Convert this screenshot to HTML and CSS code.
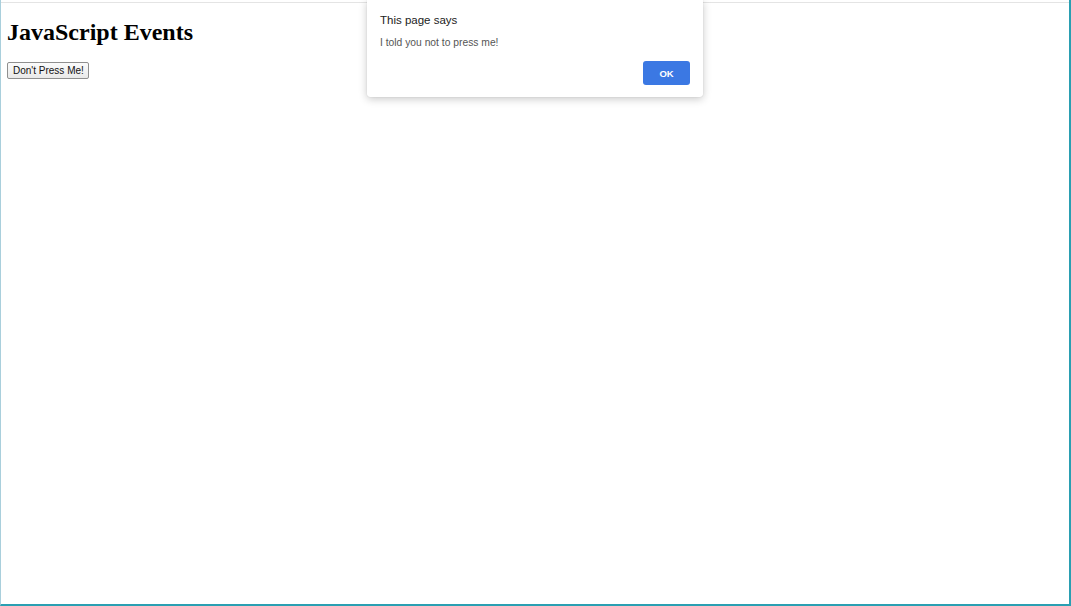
FILE: index.html
```html
<!DOCTYPE html>
<html>
<head>
<meta charset="utf-8">
<title>JavaScript Events</title>
<link rel="stylesheet" href="styles.css">
</head>
<body>
<div class="window">
  <div class="viewport">
    <h1 class="title">JavaScript Events</h1>
    <button class="press-btn">Don't Press Me!</button>
  </div>
  <div class="dialog">
    <div class="dialog-title">This page says</div>
    <div class="dialog-msg">I told you not to press me!</div>
    <div class="dialog-actions">
      <button class="ok-btn">OK</button>
    </div>
  </div>
</div>
</body>
</html>
```

FILE: styles.css
```css
html, body {
  margin: 0;
  padding: 0;
  background: #ffffff;
}
.window {
  position: relative;
  width: 1071px;
  height: 606px;
  box-sizing: border-box;
  padding-top: 2px;
  border-left: 1px solid #a9cfdc;
  border-right: 2px solid #2a9fb2;
  border-bottom: 2px solid #2a9fb2;
  background: #fff;
  overflow: hidden;
}
.viewport {
  height: 100%;
  box-sizing: border-box;
  border-top: 1px solid #e4e4e4;
  padding: 0 6px;
}
.title {
  font-family: "Liberation Serif", "Times New Roman", serif;
  font-weight: bold;
  font-size: 24px;
  line-height: 27px;
  margin: 16px 0 14px;
  color: #000;
}
.press-btn {
  font-family: "Liberation Sans", Arial, sans-serif;
  font-size: 10px;
  height: 17px;
  padding: 0 4px 0 5px;
  margin: 0;
  border: 1px solid #8f8f8f;
  border-radius: 2px;
  background: linear-gradient(#fbfbfb, #e9e9e9);
  color: #111;
  line-height: 15px;
}
.dialog {
  position: absolute;
  left: 366px;
  top: 0;
  width: 336px;
  height: 97px;
  box-sizing: border-box;
  background: #fff;
  border-radius: 0 0 3px 3px;
  box-shadow: 0 2px 8px rgba(0,0,0,0.22), 0 0 1px rgba(0,0,0,0.2);
  padding: 13px 13px 12px 13px;
  display: flex;
  flex-direction: column;
  font-family: "Liberation Sans", Arial, sans-serif;
}
.dialog-title {
  font-size: 11.5px;
  color: #222;
  line-height: 14px;
}
.dialog-msg {
  font-size: 10.3px;
  color: #555;
  margin-top: 10px;
  line-height: 12px;
}
.dialog-actions {
  margin-top: auto;
  display: flex;
  justify-content: flex-end;
}
.ok-btn {
  width: 47px;
  height: 24px;
  border: none;
  border-radius: 3px;
  background: #3b78e3;
  color: #fff;
  font-family: "Liberation Sans", Arial, sans-serif;
  font-weight: bold;
  font-size: 9.5px;
  padding: 0;
}
```
